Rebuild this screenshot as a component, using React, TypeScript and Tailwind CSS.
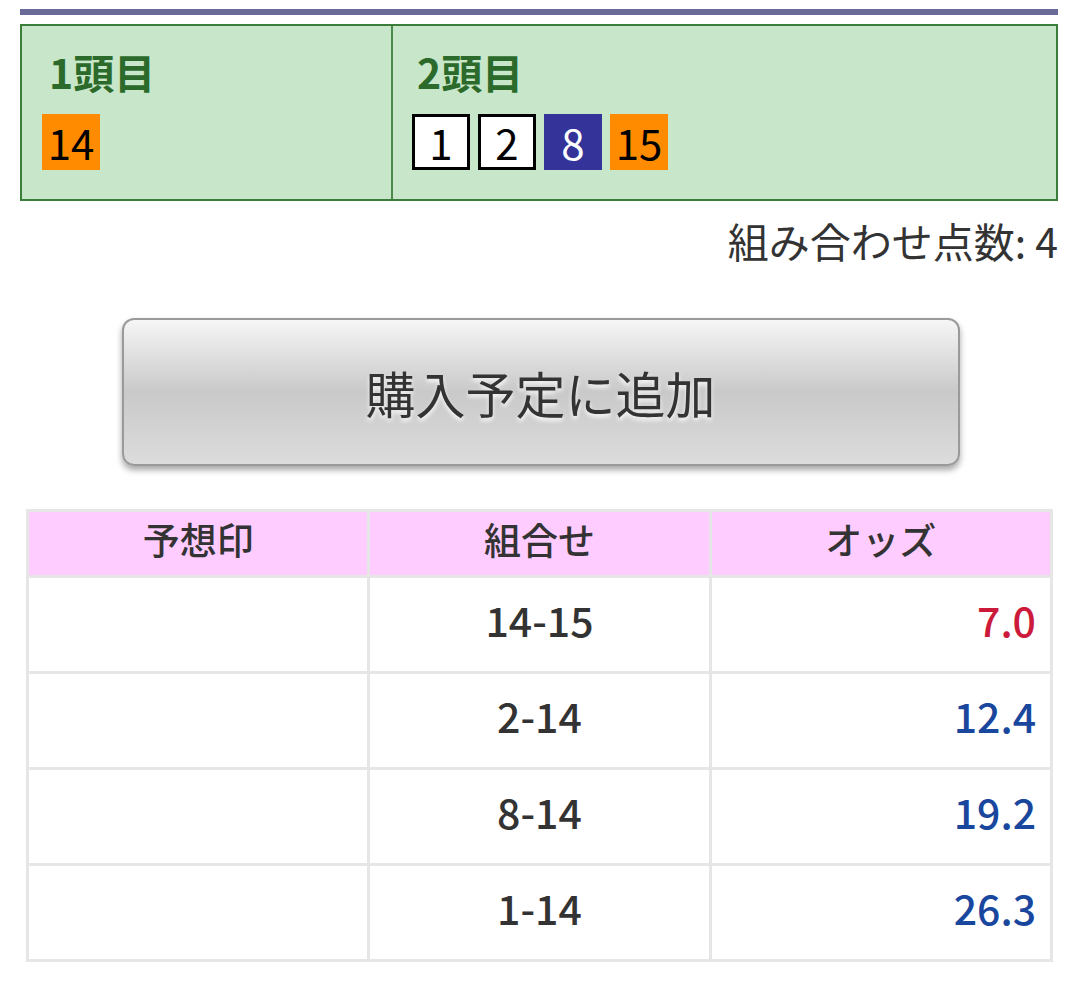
import React from 'react';

type Horse = { num: number; bg: string; fg: string; bordered?: boolean };

const first: Horse[] = [{ num: 14, bg: 'bg-[#ff8c00]', fg: 'text-black' }];
const second: Horse[] = [
  { num: 1, bg: 'bg-white', fg: 'text-black', bordered: true },
  { num: 2, bg: 'bg-white', fg: 'text-black', bordered: true },
  { num: 8, bg: 'bg-[#333399]', fg: 'text-white' },
  { num: 15, bg: 'bg-[#ff8c00]', fg: 'text-black' },
];

const rows = [
  { combo: '14-15', odds: '7.0', hot: true },
  { combo: '2-14', odds: '12.4', hot: false },
  { combo: '8-14', odds: '19.2', hot: false },
  { combo: '1-14', odds: '26.3', hot: false },
];

const font = { fontFamily: '"Noto Sans CJK JP", "Noto Sans", sans-serif' };

// Horse number badge
const Badge: React.FC<{ h: Horse }> = ({ h }) => (
  <div
    className={`w-[58px] h-[56px] flex items-center justify-center text-[42px] leading-none ${h.bg} ${h.fg} ${
      h.bordered ? 'border-[3px] border-black' : ''
    }`}
  >
    {h.num}
  </div>
);

const App: React.FC = () => {
  return (
    <div className="w-[1080px] h-[991px] bg-white pl-[20px] pr-[22px]" style={font}>
      <div className="pt-[9px]">
        <div className="h-[6px] bg-[#6a6a98]" />
      </div>

      {/* selection box */}
      <div className="mt-[9px] h-[177px] flex border-2 border-[#3b7d3b] bg-[#c8e6c9]">
        <div className="w-[371px] border-r-2 border-[#4a8a4a] pl-[20px] pt-[25px]">
          <div className="text-[41px] font-bold leading-none text-[#2b6a2b] pl-[7px]">1頭目</div>
          <div className="flex gap-[8px] mt-[22px]">
            {first.map((h) => (
              <Badge key={h.num} h={h} />
            ))}
          </div>
        </div>
        <div className="flex-1 pl-[19px] pt-[25px]">
          <div className="text-[41px] font-bold leading-none text-[#2b6a2b] pl-[5px]">2頭目</div>
          <div className="flex gap-[8px] mt-[22px]">
            {second.map((h) => (
              <Badge key={h.num} h={h} />
            ))}
          </div>
        </div>
      </div>

      <div className="text-right text-[41px] leading-none text-[#333] mt-[19px]">組み合わせ点数: 4</div>

      {/* add button */}
      <div className="flex justify-center mt-[57px]">
        <button
          className="w-[838px] h-[148px] ml-[3px] rounded-[12px] border-2 border-[#9a9a9a] bg-gradient-to-b from-[#f6f6f6] via-[#c9c9c9] to-[#dcdcdc] shadow-[0_4px_6px_rgba(0,0,0,0.35)] text-[50px] text-[#333] [text-shadow:0_3px_4px_rgba(255,255,255,0.9)]"
          style={font}
        >
          購入予定に追加
        </button>
      </div>

      {/* odds table */}
      <div className="mt-[43px] pl-[6px] pr-[5px]">
        <table className="w-full border-collapse table-fixed border-[3px] border-[#e6e6e6]">
          <thead>
            <tr className="bg-[#ffccff] h-[66px]">
              <th className="border-[3px] border-[#e6e6e6] font-medium text-[37px] text-[#333] leading-none pb-[8px]">予想印</th>
              <th className="border-[3px] border-[#e6e6e6] font-medium text-[37px] text-[#333] leading-none pb-[8px]">組合せ</th>
              <th className="border-[3px] border-[#e6e6e6] font-medium text-[37px] text-[#333] leading-none pb-[8px]">オッズ</th>
            </tr>
          </thead>
          <tbody>
            {rows.map((r) => (
              <tr key={r.combo} className="h-[96px]">
                <td className="border-[3px] border-[#e6e6e6]" />
                <td className="border-[3px] border-[#e6e6e6] text-center text-[41px] text-[#333] font-medium leading-none pb-[10px]">
                  {r.combo}
                </td>
                <td
                  className={`border-[3px] border-[#e6e6e6] text-right pr-[14px] text-[41px] font-medium leading-none pb-[10px] ${
                    r.hot ? 'text-[#cc1a3a]' : 'text-[#1a479e]'
                  }`}
                >
                  {r.odds}
                </td>
              </tr>
            ))}
          </tbody>
        </table>
      </div>
    </div>
  );
};

export default App;
